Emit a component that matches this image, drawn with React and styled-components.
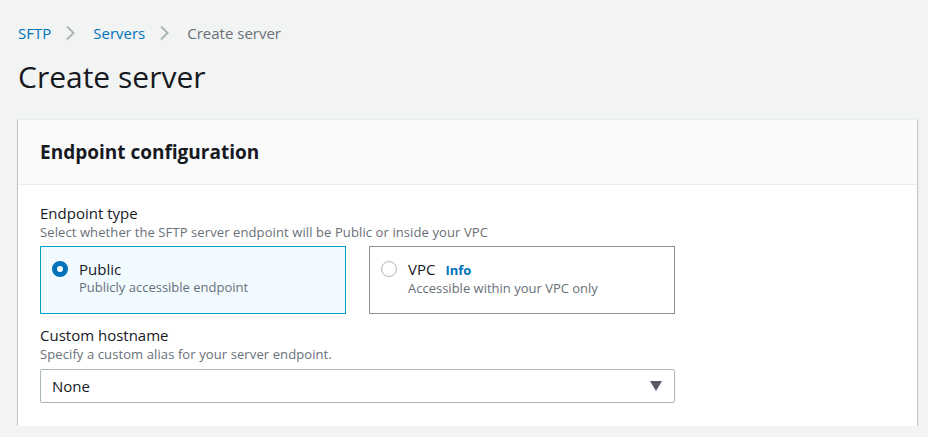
import React, { useState } from "react";
import styled, { createGlobalStyle } from "styled-components";

const GlobalStyle = createGlobalStyle`
  html, body {
    margin: 0;
    padding: 0;
    background-color: #f2f3f3;
    font-family: "Open Sans", "Noto Sans", sans-serif;
    color: #16191f;
  }
`;

const Page = styled.div`
  padding: 22px 11px 0 18px;
  display: flex;
  flex-direction: column;
`;

const Breadcrumbs = styled.nav`
  display: flex;
  align-items: center;
  gap: 12px;
  font-size: 15px;
  line-height: 22px;
`;

const Crumb = styled.span`
  color: ${({ $current }) => ($current ? "#687078" : "#0073bb")};
`;

const Chevron = styled.svg`
  width: 14px;
  height: 18px;
  margin-right: 4px;
`;

const Title = styled.h1`
  margin: 15px 0 0;
  font-size: 30px;
  font-weight: 400;
  line-height: 36px;
  color: #16191f;
`;

const Card = styled.section`
  margin-top: 24px;
  background: #ffffff;
  border-top: 1px solid #eaeded;
  box-shadow: 0 1px 1px 0 rgba(0, 28, 36, 0.3), 1px 1px 1px 0 rgba(0, 28, 36, 0.15),
    -1px 1px 1px 0 rgba(0, 28, 36, 0.15);
`;

const CardHeader = styled.header`
  background: #fafafa;
  border-bottom: 1px solid #eaeded;
  height: 64px;
  padding: 0 22px;
  display: flex;
  align-items: center;
`;

const CardTitle = styled.h2`
  margin: 0;
  font-size: 19px;
  font-weight: 700;
  color: #16191f;
`;

const CardBody = styled.div`
  padding: 18px 22px 23px;
  display: flex;
  flex-direction: column;
`;

const Field = styled.div`
  display: flex;
  flex-direction: column;
  & + & {
    margin-top: 11px;
  }
`;

const Label = styled.div`
  font-size: 15px;
  line-height: 20px;
  color: #16191f;
`;

const Description = styled.div`
  font-size: 13px;
  letter-spacing: 0.1px;
  line-height: 18px;
  color: #687078;
`;

const Tiles = styled.div`
  margin-top: 5px;
  display: grid;
  grid-template-columns: 306px 306px;
  gap: 23px;
`;

const Tile = styled.label`
  height: 68px;
  box-sizing: border-box;
  padding: 12px 11px;
  display: flex;
  align-items: flex-start;
  gap: 11px;
  cursor: pointer;
  border: 1px solid ${({ $selected }) => ($selected ? "#00a1c9" : "#879596")};
  background: ${({ $selected }) => ($selected ? "#f1faff" : "#ffffff")};
`;

const Radio = styled.span`
  margin-top: 2px;
  width: 16px;
  height: 16px;
  box-sizing: border-box;
  border-radius: 50%;
  flex-shrink: 0;
  border: ${({ $checked }) => ($checked ? "5px solid #0073bb" : "1px solid #aab7b8")};
  background: #ffffff;
`;

const TileText = styled.div`
  display: flex;
  flex-direction: column;
`;

const TileTitle = styled.div`
  font-size: 15px;
  line-height: 20px;
  color: #16191f;
  display: flex;
  align-items: baseline;
  gap: 10px;
`;

const Info = styled.span`
  font-size: 13px;
  font-weight: 700;
  color: #0073bb;
`;

const TileDesc = styled.div`
  font-size: 13px;
  line-height: 16px;
  color: #687078;
`;

const Select = styled.div`
  margin-top: 6px;
  width: 635px;
  height: 34px;
  box-sizing: border-box;
  border: 1px solid #aab7b8;
  border-radius: 2px;
  background: #ffffff;
  display: flex;
  align-items: center;
  justify-content: space-between;
  padding: 0 12px 0 11px;
  font-size: 15px;
  color: #16191f;
`;

const Caret = styled.svg`
  width: 12px;
  height: 10px;
`;

const ChevronIcon = () => (
  <Chevron viewBox="0 0 14 18">
    <path d="M4 2.5 L10.5 9 L4 15.5" fill="none" stroke="#aab7b8" strokeWidth="2" />
  </Chevron>
);

export default function App() {
  const [endpoint, setEndpoint] = useState("public");

  return (
    <>
      <GlobalStyle />
      <Page>
        <Breadcrumbs>
          <Crumb>SFTP</Crumb>
          <ChevronIcon />
          <Crumb>Servers</Crumb>
          <ChevronIcon />
          <Crumb $current>Create server</Crumb>
        </Breadcrumbs>
        <Title>Create server</Title>
        <Card>
          <CardHeader>
            <CardTitle>Endpoint configuration</CardTitle>
          </CardHeader>
          <CardBody>
            <Field>
              <Label>Endpoint type</Label>
              <Description>Select whether the SFTP server endpoint will be Public or inside your VPC</Description>
              <Tiles>
                <Tile $selected={endpoint === "public"} onClick={() => setEndpoint("public")}>
                  <Radio $checked={endpoint === "public"} />
                  <TileText>
                    <TileTitle>Public</TileTitle>
                    <TileDesc>Publicly accessible endpoint</TileDesc>
                  </TileText>
                </Tile>
                <Tile $selected={endpoint === "vpc"} onClick={() => setEndpoint("vpc")}>
                  <Radio $checked={endpoint === "vpc"} />
                  <TileText>
                    <TileTitle>
                      VPC <Info>Info</Info>
                    </TileTitle>
                    <TileDesc>Accessible within your VPC only</TileDesc>
                  </TileText>
                </Tile>
              </Tiles>
            </Field>
            <Field>
              <Label>Custom hostname</Label>
              <Description>Specify a custom alias for your server endpoint.</Description>
              <Select>
                <span>None</span>
                <Caret viewBox="0 0 12 10">
                  <path d="M0 0 H12 L6 10 Z" fill="#545b64" />
                </Caret>
              </Select>
            </Field>
          </CardBody>
        </Card>
      </Page>
    </>
  );
}
